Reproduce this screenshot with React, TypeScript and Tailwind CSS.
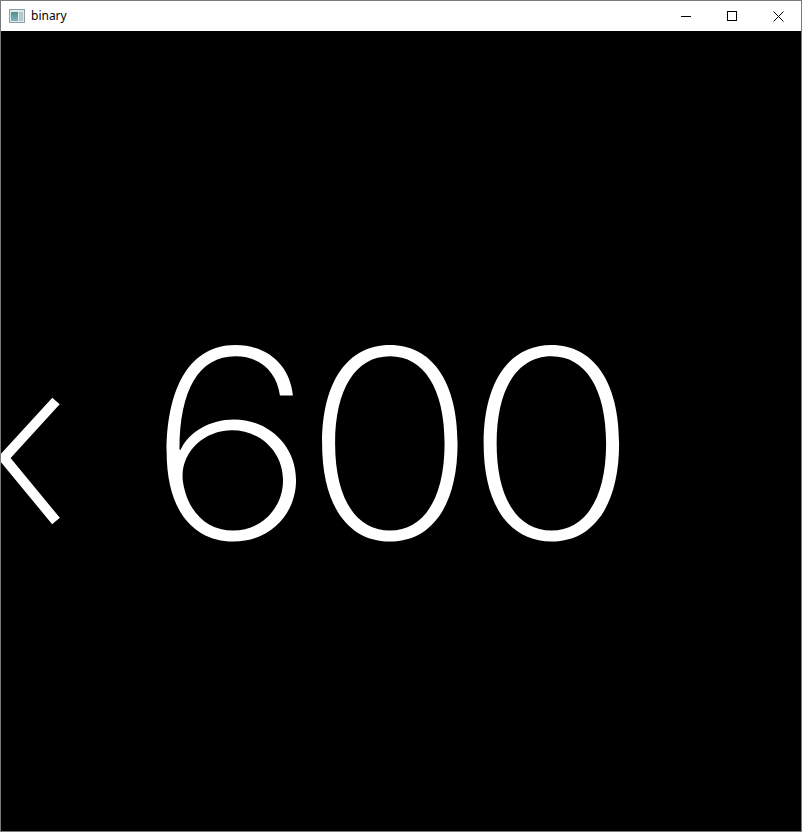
export default function App() {
  return (
    <div className="flex h-[832px] w-[802px] flex-col border border-[#7a7a7a] bg-white">
      <div className="flex h-[30px] shrink-0 items-center bg-white">
        <div className="ml-[8px] flex h-[14px] w-[16px] items-center gap-[1px] border border-[#8aa0a8] bg-[#dfe8ea] px-[1px]">
          <div className="h-[9px] w-[8px] bg-gradient-to-b from-[#4f8f8a] to-[#7fb4c0]" />
          <div className="h-[9px] w-[4px] bg-[#b9c7cc]" />
        </div>
        <span className="ml-[6px] text-[12px] text-black" style={{ fontFamily: '"Noto Sans", sans-serif' }}>
          binary
        </span>
        <div className="ml-auto flex h-full">
          <button className="flex h-full w-[46px] items-center justify-center">
            <div className="h-px w-[10px] bg-black" />
          </button>
          <button className="flex h-full w-[46px] items-center justify-center">
            <div className="h-[10px] w-[10px] border border-black" />
          </button>
          <button className="flex h-full w-[46px] items-center justify-center">
            <svg width="11" height="11" viewBox="0 0 11 11" fill="none" stroke="black" strokeWidth="1">
              <path d="M0.5 0.5L10.5 10.5M10.5 0.5L0.5 10.5" />
            </svg>
          </button>
        </div>
      </div>
      <div className="relative flex-1 overflow-hidden bg-black">
        {/* back chevron */}
        <svg className="absolute left-0 top-[359px]" width="70" height="140" viewBox="0 0 70 140" fill="none">
          <path d="M55 11L3 68L55 131" stroke="white" strokeWidth="10" strokeLinejoin="miter" />
        </svg>
        <span
          className="absolute left-[146px] top-[281px] origin-left scale-x-[1.1] whitespace-nowrap text-[263px] font-extralight leading-none tracking-[-12px] text-white"
          style={{ fontFamily: 'Inter, sans-serif' }}
        >
          600
        </span>
      </div>
    </div>
  );
}
